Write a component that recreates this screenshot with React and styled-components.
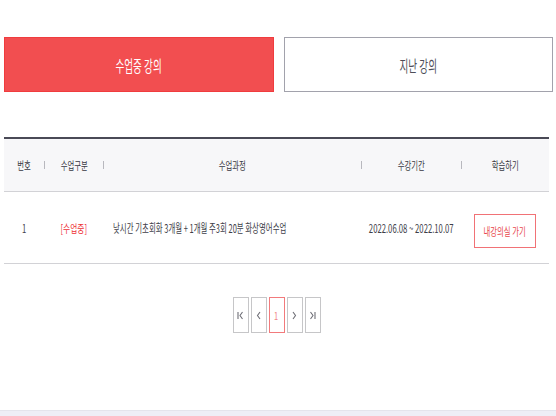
import styled, { createGlobalStyle } from "styled-components";

const GlobalStyle = createGlobalStyle`
  html, body {
    margin: 0;
    padding: 0;
    background: #ffffff;
    font-family: "Noto Sans CJK KR", "Noto Sans", sans-serif;
  }
`;

const Page = styled.div`
  min-height: 100vh;
  display: flex;
  flex-direction: column;
  box-sizing: border-box;
`;

const Main = styled.div`
  flex: 1;
  padding: 37px 3px 0 4px;
`;

const Tabs = styled.div`
  display: flex;
  gap: 10px;
`;

const Tab = styled.div`
  flex: 1;
  height: 55px;
  box-sizing: border-box;
  display: flex;
  align-items: center;
  justify-content: center;
  font-size: 16px;
  background: ${(p) => (p.$active ? "#f24e50" : "#ffffff")};
  color: ${(p) => (p.$active ? "#ffffff" : "#4e4e58")};
  border: 1px solid ${(p) => (p.$active ? "#f03c3e" : "#a2a2ac")};
`;

const Narrow = styled.span`
  display: inline-block;
  white-space: nowrap;
  transform: scaleX(${(p) => p.$scale || 0.67});
  transform-origin: ${(p) => p.$origin || "center"};
`;

const Table = styled.div`
  margin: 45px 4px 0 0;
  border-top: 2px solid #4a4a56;
`;

const cols = "40px 59px 258px 100px 1fr";

const HeadRow = styled.div`
  display: grid;
  grid-template-columns: ${cols};
  height: 52px;
  background: #f7f7f9;
  border-bottom: 1px solid #d2d2d6;
`;

const HeadCell = styled.div`
  display: flex;
  align-items: center;
  font-size: 11px;
  color: #383842;

  &::before {
    content: "";
    flex: none;
    width: 1px;
    height: 8px;
    background: ${(p) => (p.$first ? "transparent" : "#b8b8be")};
  }
`;

const HeadLabel = styled.div`
  flex: 1;
  text-align: center;
`;

const Row = styled.div`
  display: grid;
  grid-template-columns: ${cols};
  height: 71px;
  align-items: center;
  border-bottom: 1px solid #d2d2d6;
  font-size: 11.5px;
  color: #3e3e48;
`;

const Cell = styled.div`
  padding-left: ${(p) => (p.$left ? "10px" : "0")};
  color: ${(p) => p.$color || "inherit"};
  font-size: ${(p) => (p.$left ? "12px" : "inherit")};
  display: flex;
  justify-content: ${(p) => (p.$left ? "flex-start" : "center")};
`;

const ClassButton = styled.button`
  width: 62px;
  height: 34px;
  background: #ffffff;
  border: 1px solid #f17276;
  color: #e8474b;
  font-family: inherit;
  font-size: 11px;
  padding: 0;
  display: flex;
  align-items: center;
  justify-content: center;
  margin-top: 7px;
`;

const Pager = styled.div`
  display: flex;
  justify-content: center;
  gap: 2px;
  margin: 33px 4px 0 0;
`;

const PageBox = styled.div`
  width: 16px;
  height: 36px;
  box-sizing: border-box;
  border: 1px solid ${(p) => (p.$current ? "#f27a7c" : "#c6c6c8")};
  color: ${(p) => (p.$current ? "#f08585" : "#6e6e76")};
  display: flex;
  align-items: center;
  justify-content: center;
  font-size: 11px;
`;

const Footer = styled.div`
  height: 5px;
  background: #eeeef6;
  border-top: 1px solid #e4e4ec;
`;

const Arrow = ({ dir, bar }) => (
  <svg width="7" height="9" viewBox="0 0 7 9" fill="none" stroke="#6e6e76" strokeWidth="1.1">
    {dir === "left" ? (
      <>
        {bar && <line x1="1" y1="1" x2="1" y2="8" />}
        <polyline points={bar ? "5.5,1 3,4.5 5.5,8" : "5,1 2.5,4.5 5,8"} />
      </>
    ) : (
      <>
        <polyline points={bar ? "1.5,1 4,4.5 1.5,8" : "2,1 4.5,4.5 2,8"} />
        {bar && <line x1="6" y1="1" x2="6" y2="8" />}
      </>
    )}
  </svg>
);

const headers = ["번호", "수업구분", "수업과정", "수강기간", "학습하기"];

export default function App() {
  return (
    <Page>
      <GlobalStyle />
      <Main>
        <Tabs>
          <Tab $active>
            <Narrow $scale={0.6}>수업중 강의</Narrow>
          </Tab>
          <Tab>
            <Narrow $scale={0.6}>지난 강의</Narrow>
          </Tab>
        </Tabs>

        <Table>
          <HeadRow>
            {headers.map((h, i) => (
              <HeadCell key={h} $first={i === 0}>
                <HeadLabel>
                  <Narrow>{h}</Narrow>
                </HeadLabel>
              </HeadCell>
            ))}
          </HeadRow>
          <Row>
            <Cell>
              <Narrow>1</Narrow>
            </Cell>
            <Cell $color="#ee2f35">
              <Narrow>[수업중]</Narrow>
            </Cell>
            <Cell $left>
              <Narrow $origin="left" $scale={0.62}>
                낮시간 기초회화 3개월 + 1개월 주3회 20분 화상영어수업
              </Narrow>
            </Cell>
            <Cell>
              <Narrow>2022.06.08 ~ 2022.10.07</Narrow>
            </Cell>
            <Cell>
              <ClassButton>
                <Narrow>내강의실 가기</Narrow>
              </ClassButton>
            </Cell>
          </Row>
        </Table>

        <Pager>
          <PageBox>
            <Arrow dir="left" bar />
          </PageBox>
          <PageBox>
            <Arrow dir="left" />
          </PageBox>
          <PageBox $current>
            <Narrow>1</Narrow>
          </PageBox>
          <PageBox>
            <Arrow dir="right" />
          </PageBox>
          <PageBox>
            <Arrow dir="right" bar />
          </PageBox>
        </Pager>
      </Main>
      <Footer />
    </Page>
  );
}
